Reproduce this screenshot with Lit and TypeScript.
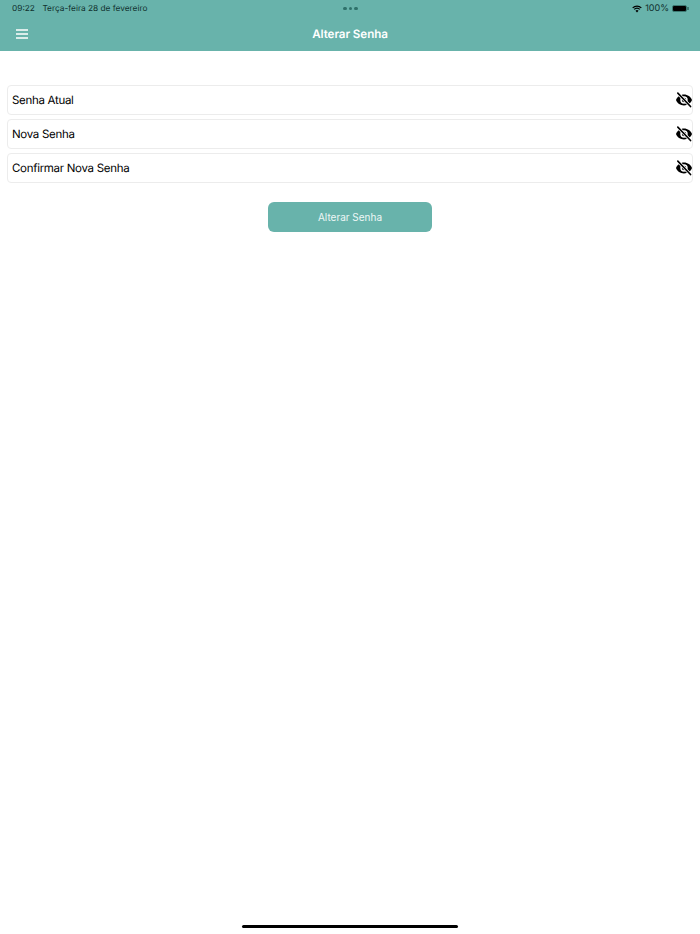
import { LitElement, html, css, svg } from "lit";
import { customElement } from "lit/decorators.js";

const eyeOff = svg`<svg class="eye" viewBox="1 1 22 22" width="16" height="16" aria-hidden="true">
  <path fill="#000" d="M12 4.5C7 4.5 2.7 7.6 1 12c1.7 4.4 6 7.5 11 7.5s9.3-3.1 11-7.5c-1.7-4.4-6-7.5-11-7.5zm0 12.6a5.1 5.1 0 1 1 0-10.2 5.1 5.1 0 0 1 0 10.2z"/>
  <circle cx="12" cy="12" r="3" fill="#000"/>
  <path d="M3.5 2.5 21 21" stroke="#fff" stroke-width="4.2" fill="none"/>
  <path d="M3.5 2.5 21 21" stroke="#000" stroke-width="2.2" fill="none" stroke-linecap="round"/>
</svg>`;

@customElement("app-root")
export class AppRoot extends LitElement {
  static styles = css`
    :host {
      display: flex;
      flex-direction: column;
      position: relative;
      height: 934px;
      background: #fff;
      font-family: Inter, "Liberation Sans", sans-serif;
      text-rendering: geometricPrecision;
      overflow: hidden;
    }
    .top {
      height: 51px;
      box-sizing: border-box;
      background: #68b3ab;
      display: flex;
      flex-direction: column;
      flex: none;
    }
    .status {
      height: 17px;
      display: grid;
      grid-template-columns: 1fr auto 1fr;
      align-items: center;
      padding: 0 11px 0 12px;
      font-size: 8.3px;
      color: #10312e;
    }
    .status-left { display: flex; gap: 7.5px; }
    .dots { display: flex; gap: 2px; }
    .dots i { width: 3.6px; height: 3.6px; border-radius: 50%; background: #2f716a; display: block; }
    .status-right { display: flex; justify-content: flex-end; align-items: center; gap: 3px; font-size: 9px; }
    .battery {
      width: 13px;
      height: 5px;
      background: #000;
      border-radius: 2px;
      border: 1px solid #3d7b74;
      display: block;
      position: relative;
      margin-right: 2px;
    }
    .battery::after {
      content: "";
      position: absolute;
      left: 14px;
      top: 1px;
      width: 1.5px;
      height: 3px;
      background: #3d7b74;
    }
    .nav {
      flex: 1;
      display: grid;
      grid-template-columns: 1fr auto 1fr;
      align-items: center;
      padding: 0 16px;
      margin-bottom: 1px;
    }
    .menu { display: block; }
    .title { color: #fff; font-size: 11.6px; font-weight: 600; letter-spacing: -0.05px; }
    .form {
      display: flex;
      flex-direction: column;
      gap: 4px;
      padding: 34px 7px 0;
    }
    .field {
      height: 30px;
      box-sizing: border-box;
      border: 1px solid #ececec;
      border-radius: 4px;
      display: flex;
      align-items: center;
      justify-content: space-between;
      padding: 0 0 0 4px;
      font-size: 11.5px;
      letter-spacing: -0.3px;
      color: #000;
    }
    .eye { display: block; }
    .actions { display: flex; justify-content: center; padding-top: 19px; }
    .btn {
      width: 164px;
      height: 30px;
      border: 0;
      border-radius: 6px;
      background: #68b3ab;
      color: #eef7f6;
      font: inherit;
      font-size: 10px;
      padding: 0;
    }
    .home {
      position: absolute;
      left: 242px;
      bottom: 6px;
      width: 216px;
      height: 3.5px;
      border-radius: 2px;
      background: #000;
    }
  `;

  render() {
    const fields = ["Senha Atual", "Nova Senha", "Confirmar Nova Senha"];
    return html`
      <div class="top">
        <div class="status">
          <div class="status-left"><span>09:22</span><span>Terça-feira 28 de fevereiro</span></div>
          <div class="dots"><i></i><i></i><i></i></div>
          <div class="status-right">
            <svg width="10" height="8" viewBox="0 0 12 9" aria-hidden="true">
              <path fill="none" stroke="#000" stroke-width="1.5" d="M.8 3.2a7.6 7.6 0 0 1 10.4 0M2.6 5a5 5 0 0 1 6.8 0"/>
              <path fill="#000" d="M4.2 6.5a2.6 2.6 0 0 1 3.6 0L6 8.6z"/>
            </svg>
            <span>100%</span>
            <i class="battery"></i>
          </div>
        </div>
        <div class="nav">
          <svg class="menu" width="12" height="10" viewBox="0 0 12 10" aria-hidden="true">
            <path stroke="#fff" stroke-width="1.5" d="M0 1h12M0 5h12M0 9h12"/>
          </svg>
          <div class="title">Alterar Senha</div>
          <div></div>
        </div>
      </div>
      <div class="form">
        ${fields.map((f) => html`<div class="field"><span>${f}</span>${eyeOff}</div>`)}
      </div>
      <div class="actions"><button class="btn">Alterar Senha</button></div>
      <div class="home"></div>
    `;
  }
}
